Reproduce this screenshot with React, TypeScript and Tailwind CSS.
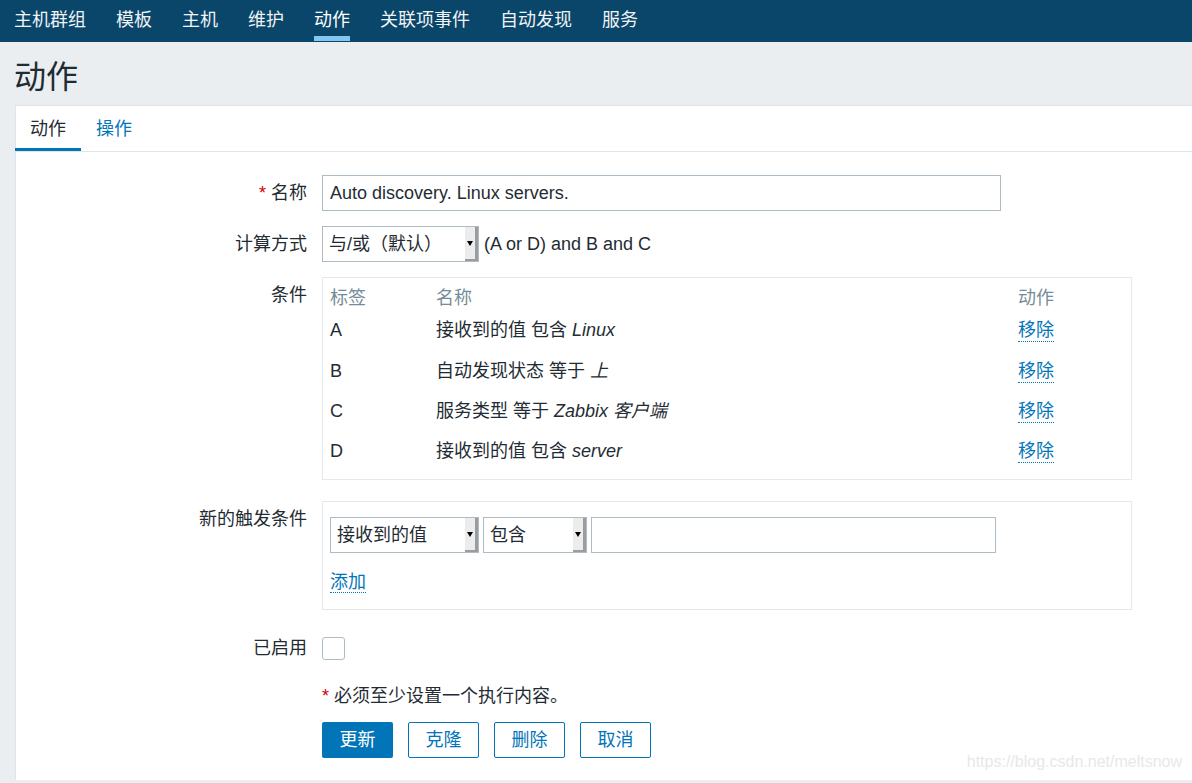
import React from 'react'

const font = { fontFamily: '"Liberation Sans", Arial, "Noto Sans CJK SC", sans-serif' }

const navItems = ['主机群组', '模板', '主机', '维护', '动作', '关联项事件', '自动发现', '服务']

const conditions = [
  { label: 'A', text: '接收到的值 包含 ', value: 'Linux' },
  { label: 'B', text: '自动发现状态 等于 ', value: '上' },
  { label: 'C', text: '服务类型 等于 ', value: 'Zabbix 客户端' },
  { label: 'D', text: '接收到的值 包含 ', value: 'server' },
]

const SelectBox: React.FC<{ text: string; width: string }> = ({ text, width }) => (
  <div className={`flex h-[36px] ${width} border border-[#acbbc4] bg-white`}>
    <span className="flex-1 pl-[6px] leading-[34px] text-[18px] text-[#1f2c33] whitespace-nowrap overflow-hidden">
      {text}
    </span>
    <span className="flex h-full w-[13px] items-center justify-center bg-[#ececec] border-r-[3px] border-b-[2px] border-[#9c9c9c]">
      <span className="block w-0 h-0 border-l-[3px] border-r-[3px] border-t-[5px] border-l-transparent border-r-transparent border-t-black" />
    </span>
  </div>
)

const Label: React.FC<{ children: React.ReactNode; top?: boolean; lh?: string }> = ({ children, top, lh }) => (
  <div
    className={`w-[291px] shrink-0 text-right text-[18px] text-[#1f2c33] ${
      top ? 'pt-[7px] leading-[22px]' : lh ?? 'leading-[36px]'
    }`}
  >
    {children}
  </div>
)

const App: React.FC = () => {
  return (
    <div className="min-h-screen bg-[#ebeef0]" style={font}>
      {/* Top menu */}
      <div className="flex h-[42px] gap-[30px] bg-[#0a466a] pl-[14px]">
        {navItems.map((item) => (
          <div key={item} className="flex flex-col pt-[8px]">
            <span className={`text-[18px] leading-[24px] ${item === '动作' ? 'text-white' : 'text-[#f0f3f5]'}`}>
              {item}
            </span>
            <span className={`mt-[4px] block h-[5px] ${item === '动作' ? 'bg-[#84c6f0]' : ''}`} />
          </div>
        ))}
      </div>

      {/* Title */}
      <div className="h-[63px] pl-[14px] pt-[16px]">
        <h1 className="text-[32px] leading-[38px] text-[#1f2c33]">动作</h1>
      </div>

      {/* Panel */}
      <div className="relative ml-[15px] border-t border-l border-[#dfe4e7] bg-white pb-[22px]">
        <div className="flex h-[46px] border-b border-[#dfe4e7]">
          <div className="-ml-px h-[45px] border-b-[3px] border-[#0275b8] px-[15px] pt-[12px] text-[18px] leading-[22px] text-[#1f2c33]">
            动作
          </div>
          <div className="h-[45px] px-[15px] pt-[12px] text-[18px] leading-[22px] text-[#0275b8]">操作</div>
        </div>

        <div className="pt-[23px]">
          {/* Name */}
          <div className="flex gap-[15px]">
            <Label>
              <span className="text-[#d40000]">*</span> 名称
            </Label>
            <div className="h-[36px] w-[679px] border border-[#acbbc4] px-[7px] text-[18px] leading-[34px] text-[#1f2c33]">
              Auto discovery. Linux servers.
            </div>
          </div>

          {/* Calc */}
          <div className="mt-[15px] flex gap-[15px]">
            <Label>计算方式</Label>
            <div className="flex items-center gap-[5px]">
              <SelectBox text="与/或（默认）" width="w-[157px]" />
              <span className="text-[18px] text-[#1f2c33]">(A or D) and B and C</span>
            </div>
          </div>

          {/* Conditions */}
          <div className="mt-[15px] flex gap-[15px]">
            <Label top>条件</Label>
            <div className="w-[810px] border border-[#e6e9eb] pt-[9px] pb-[8px] pl-[7px] text-[18px] text-[#1f2c33]">
              <div className="grid grid-cols-[106px_582px_1fr] h-[22px] leading-[22px] text-[#768d99]">
                <span>标签</span>
                <span>名称</span>
                <span>动作</span>
              </div>
              {conditions.map((c, i) => (
                <div
                  key={c.label}
                  className={`grid grid-cols-[106px_582px_1fr] items-center ${i === 0 ? 'h-[42px]' : 'h-[40px]'}`}
                >
                  <span>{c.label}</span>
                  <span>
                    {c.text}
                    <i>{c.value}</i>
                  </span>
                  <span>
                    <span className="inline-block border-b border-dotted border-[#0275b8] leading-[22px] text-[#0275b8]">
                      移除
                    </span>
                  </span>
                </div>
              ))}
            </div>
          </div>

          {/* New condition */}
          <div className="mt-[21px] flex gap-[15px]">
            <Label top>新的触发条件</Label>
            <div className="w-[810px] border border-[#e6e9eb] px-[7px] pt-[15px] pb-[14px]">
              <div className="flex gap-[4px]">
                <SelectBox text="接收到的值" width="w-[149px]" />
                <SelectBox text="包含" width="w-[104px]" />
                <div className="h-[36px] w-[405px] border border-[#acbbc4]" />
              </div>
              <div className="mt-[18px]">
                <span className="inline-block border-b border-dotted border-[#0275b8] text-[18px] leading-[20px] text-[#0275b8]">
                  添加
                </span>
              </div>
            </div>
          </div>

          {/* Enabled */}
          <div className="mt-[27px] flex items-center gap-[15px]">
            <Label lh="leading-[23px]">已启用</Label>
            <div className="h-[23px] w-[23px] rounded-[3px] border border-[#acbbc4] bg-white" />
          </div>

          {/* Note */}
          <div className="mt-[25px] flex gap-[15px]">
            <div className="w-[291px] shrink-0" />
            <div className="text-[18px] leading-[22px] text-[#1f2c33]">
              <span className="text-[#d40000]">*</span> 必须至少设置一个执行内容。
            </div>
          </div>

          {/* Buttons */}
          <div className="mt-[15px] flex gap-[15px]">
            <div className="w-[291px] shrink-0" />
            <div className="flex gap-[15px]">
              <button className="h-[36px] w-[71px] rounded-[2px] bg-[#0275b8] text-[18px] text-white">更新</button>
              {['克隆', '删除', '取消'].map((b) => (
                <button
                  key={b}
                  className="h-[36px] w-[71px] rounded-[2px] border border-[#0275b8] bg-white text-[18px] text-[#0275b8]"
                >
                  {b}
                </button>
              ))}
            </div>
          </div>
        </div>

        <div className="absolute bottom-[6px] right-[10px] text-[16px] text-[#e8e8e8]">
          https://blog.csdn.net/meltsnow
        </div>
      </div>
    </div>
  )
}

export default App
